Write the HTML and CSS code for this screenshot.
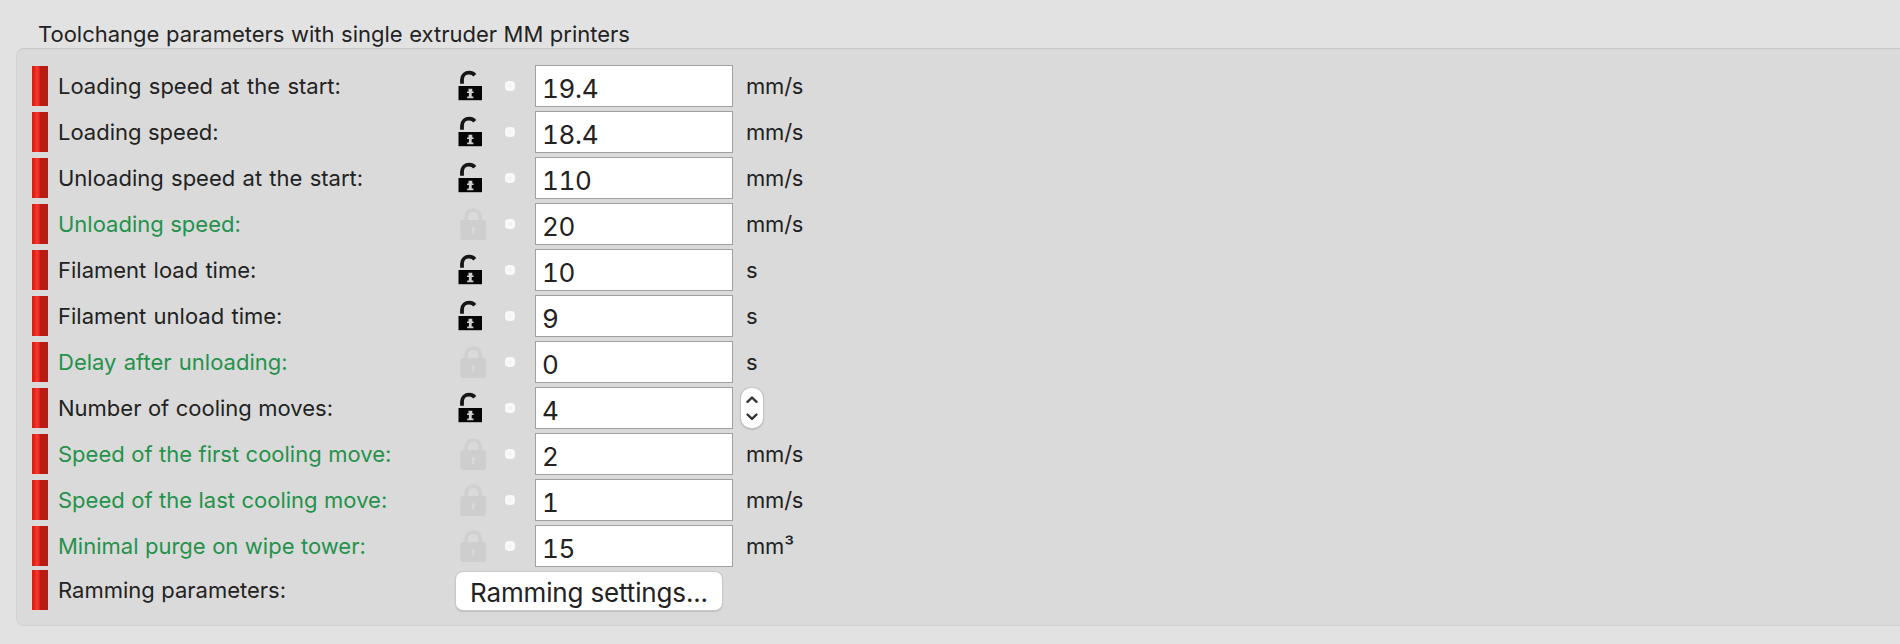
FILE: index.html
```
<!DOCTYPE html>
<html lang="en">
<head>
<meta charset="utf-8">
<title>Toolchange parameters</title>
<link rel="stylesheet" href="styles.css">
</head>
<body>
<svg class="symbols" width="0" height="0">
  <symbol id="open" viewBox="0 0 36 42">
    <path d="M6 18.800v-4C6 10.500 9.200 7.700 13.200 7.700c2.300 0 4.200.9 5.600 2.600" fill="none" stroke="#161616" stroke-width="3.800"/>
    <path d="M2.500 21h23.500v14.200H2.500z" fill="#050505"/>
    <path d="M12.500 23.800h3.800v2.600h1.300v1.500h-1.900v3.700h1.700v1.700h-6.200v-1.700h1.700v-3.700h-1.900v-1.500h1.500z" fill="#d0d0d0"/>
  </symbol>
  <symbol id="closed" viewBox="0 0 36 42">
    <path d="M10.200 18v-3.200c0-5 2.700-7.800 7-7.800s7 2.800 7 7.800V18" fill="none" stroke="#d0d0d0" stroke-width="3.600"/>
    <rect x="4.300" y="17" width="25.700" height="20" rx="2.500" fill="#cecece"/>
    <path d="M17 24a2 2 0 0 1 1.200 3.600V31h-2v-3.400A2 2 0 0 1 17 24z" fill="#d9d9d9"/>
  </symbol>
</svg>
<main class="section">
  <h1 class="title">Toolchange parameters with single extruder MM printers</h1>
  <div class="panel">
    <div class="row"><i class="bar"></i><label class="label spaced">Loading speed at the start:</label><svg class="lock"><use href="#open"/></svg><i class="dot"></i><span class="field">19.4</span><span class="unit">mm/s</span></div>
    <div class="row"><i class="bar"></i><label class="label">Loading speed:</label><svg class="lock"><use href="#open"/></svg><i class="dot"></i><span class="field">18.4</span><span class="unit">mm/s</span></div>
    <div class="row"><i class="bar"></i><label class="label spaced">Unloading speed at the start:</label><svg class="lock"><use href="#open"/></svg><i class="dot"></i><span class="field">110</span><span class="unit">mm/s</span></div>
    <div class="row"><i class="bar"></i><label class="label system">Unloading speed:</label><svg class="lock"><use href="#closed"/></svg><i class="dot"></i><span class="field">20</span><span class="unit">mm/s</span></div>
    <div class="row"><i class="bar"></i><label class="label spaced">Filament load time:</label><svg class="lock"><use href="#open"/></svg><i class="dot"></i><span class="field">10</span><span class="unit">s</span></div>
    <div class="row"><i class="bar"></i><label class="label spaced">Filament unload time:</label><svg class="lock"><use href="#open"/></svg><i class="dot"></i><span class="field">9</span><span class="unit">s</span></div>
    <div class="row"><i class="bar"></i><label class="label system spaced">Delay after unloading:</label><svg class="lock"><use href="#closed"/></svg><i class="dot"></i><span class="field">0</span><span class="unit">s</span></div>
    <div class="row"><i class="bar"></i><label class="label">Number of cooling moves:</label><svg class="lock"><use href="#open"/></svg><i class="dot"></i><span class="field">4</span><span class="stepper"><svg width="22" height="40" viewBox="0 0 22 40"><path d="M6.500 13.800 11 9.500l4.500 4.300M6.500 26.500l4.500 4.300 4.500-4.300" fill="none" stroke="#333" stroke-width="2.400" stroke-linecap="round" stroke-linejoin="round"/></svg></span></div>
    <div class="row"><i class="bar"></i><label class="label system">Speed of the first cooling move:</label><svg class="lock"><use href="#closed"/></svg><i class="dot"></i><span class="field">2</span><span class="unit">mm/s</span></div>
    <div class="row"><i class="bar"></i><label class="label system">Speed of the last cooling move:</label><svg class="lock"><use href="#closed"/></svg><i class="dot"></i><span class="field">1</span><span class="unit">mm/s</span></div>
    <div class="row"><i class="bar"></i><label class="label system">Minimal purge on wipe tower:</label><svg class="lock"><use href="#closed"/></svg><i class="dot"></i><span class="field">15</span><span class="unit">mm³</span></div>
    <div class="row last"><i class="bar"></i><label class="label">Ramming parameters:</label><button class="button">Ramming settings...</button></div>
  </div>
</main>
</body>
</html>
```
FILE: styles.css
```
* { box-sizing: border-box; }
body {
  margin: 0;
  height: 644px;
  overflow: hidden;
  background: #e2e2e2;
  color: #222;
  font-family: Inter, "Liberation Sans", sans-serif;
  font-size: 22px;
}
.symbols { display: block; height: 0; }
.section { padding: 20px 0 0 16px; }
.title {
  margin: 0;
  height: 28px;
  padding-left: 22px;
  font-size: 22px;
  font-weight: 400;
  line-height: 28px;
  word-spacing: 0.35px;
  white-space: nowrap;
}
.panel {
  display: flex;
  flex-direction: column;
  gap: 4px;
  height: 578px;
  padding: 16px 0 0 15px;
  border: 1px solid #d2d2d2;
  border-top-color: #c6c6c6;
  border-right: 0;
  border-radius: 8px 0 0 8px;
  background: #dadada;
}
.row {
  display: grid;
  grid-template-columns: 26px 398px 49px 30px 198px auto;
  align-items: center;
  justify-content: start;
  height: 42px;
}
.bar {
  width: 16px;
  height: 40px;
  background: linear-gradient(90deg, #d81e12 0, #e0261a 3px, #f5352f 4px, #f5352f 6px, #e3241a 7px, #dc2015 8px, #b81c12 8px);
}
.label { line-height: 28px; word-spacing: 0.3px; white-space: nowrap; }
.spaced { word-spacing: 1.1px; }
.system { color: #24924b; }
.lock { display: block; width: 36px; height: 42px; }
.dot {
  width: 10px;
  height: 10px;
  border: 3px solid #f9f9f9;
  border-radius: 4px;
  background: #f5f5f5;
}
.field {
  height: 42px;
  padding: 5px 0 0 6px;
  border: 1px solid #a0a0a0;
  background: #fff;
  font-size: 26px;
  font-variant-numeric: tabular-nums;
  letter-spacing: -0.3px;
  line-height: 36px;
}
.unit { padding-left: 13px; line-height: 28px; letter-spacing: -0.2px; }
.stepper {
  width: 22px;
  height: 40px;
  margin-left: 8px;
  border-radius: 10px;
  background: #fff;
  box-shadow: 0 0 0 1px #c4c4c4, 0 1px 2px #888;
}
.stepper svg { display: block; }
.last { height: 40px; margin-top: -1px; }
.button {
  width: 266px;
  height: 38px;
  padding: 3px 0 0;
  margin-top: 1px;
  border: 0;
  border-radius: 7px;
  background: #fff;
  box-shadow: 0 0 0 1px #c9c9c9, 0 1px 2px #888;
  color: #222;
  font: 26px/35px Inter, "Liberation Sans", sans-serif;
  letter-spacing: -0.15px;
  white-space: nowrap;
}
```
